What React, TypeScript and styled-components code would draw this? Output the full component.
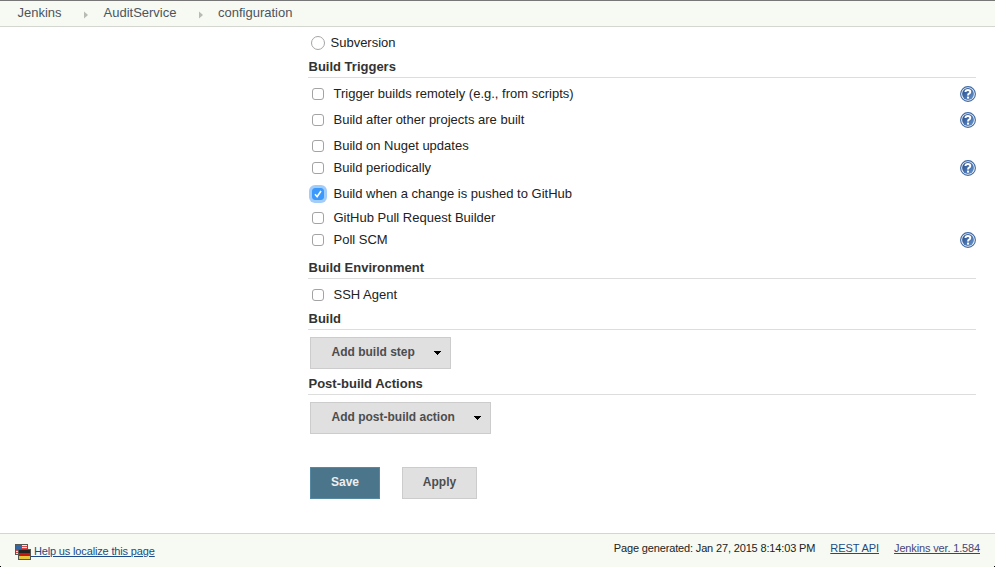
import React from "react";
import styled, { createGlobalStyle } from "styled-components";

const GlobalStyle = createGlobalStyle`
  * { box-sizing: border-box; }
  body {
    margin: 0;
    background: #fff;
    color: #333;
    font: 13px/18px "Liberation Sans", Arial, sans-serif;
    overflow: hidden;
  }
`;

const Page = styled.div`
  display: flex;
  flex-direction: column;
  height: 567px;
`;

const Breadcrumbs = styled.nav`
  display: flex;
  height: 27px;
  padding: 2px 0 0 17px;
  background: #f6faf2;
  border-top: 1px solid #777;
  border-bottom: 1px solid #d3d7cf;
  color: #4d545d;
  line-height: 19px;
`;

const Crumb = styled.span<{ $width?: number }>`
  width: ${(p) => (p.$width ? `${p.$width}px` : "auto")};
  padding-left: ${(p) => (p.$width ? 0.5 : 0)}px;
  white-space: nowrap;
`;

const CrumbArrow = styled.svg`
  width: 4px;
  height: 8px;
  margin: 8px 15px 0 0;
`;

const Form = styled.main`
  flex: 1;
  width: 668px;
  margin-left: 308px;
  padding-top: 7px;
`;

const Heading = styled.h2<{ $gap: number }>`
  height: 21px;
  margin: ${(p) => p.$gap}px 0 7px;
  padding-left: 0.5px;
  border-bottom: 1px solid #ddd;
  color: #333;
  font-size: 13px;
  font-weight: bold;
  line-height: 20px;
`;

const Row = styled.label<{ $gap?: number }>`
  display: flex;
  align-items: center;
  height: 18px;
  margin-top: ${(p) => p.$gap ?? 0}px;
  padding-left: 4px;
`;

const Label = styled.span`
  flex: 1;
  color: #222;
`;

const Radio = styled.input.attrs({ type: "radio" })`
  appearance: none;
  width: 14px;
  height: 14px;
  margin: 0 5.5px 0 -1px;
  border: 1px solid #a5a5a5;
  border-radius: 50%;
  background: #fff;
`;

const Box = styled.span<{ $checked?: boolean }>`
  display: flex;
  width: 12px;
  height: 12px;
  margin-right: 9.5px;
  border: 1px solid ${(p) => (p.$checked ? "#3b99fc" : "#a3a3a3")};
  border-radius: 3px;
  background: ${(p) => (p.$checked ? "#3b99fc" : "#fff")};
  box-shadow: ${(p) => (p.$checked ? "0 0 0 3px #a2cdfb" : "none")};
`;

const Help = styled.svg`
  width: 16px;
  height: 16px;
`;

const Button = styled.button<{ $primary?: boolean; $menu?: boolean; $width: number }>`
  display: flex;
  justify-content: ${(p) => (p.$menu ? "space-between" : "center")};
  width: ${(p) => p.$width}px;
  height: 32px;
  margin: 0;
  padding: ${(p) => (p.$menu ? "0 9px 0 20.5px" : "0")};
  border: 1px solid ${(p) => (p.$primary ? "#5788a1" : "#ccc")};
  border-radius: 0;
  background: ${(p) => (p.$primary ? "#4b758b" : "#e0e0e0")};
  color: ${(p) => (p.$primary ? "#eee" : "#4d4d4d")};
  font: bold 12px/29px "Liberation Sans", Arial, sans-serif;
`;

const Caret = styled.svg`
  width: 7px;
  height: 4px;
  margin-top: 13px;
`;

const Buttons = styled.div<{ $top?: number }>`
  display: flex;
  gap: 22px;
  margin: ${(p) => p.$top ?? 0}px 0 0 2px;
`;

const Footer = styled.footer`
  display: flex;
  justify-content: space-between;
  height: 34px;
  padding: 6px 15px 0;
  background:
    linear-gradient(#000, #000) left bottom / 1px 1px no-repeat,
    linear-gradient(#000, #000) right bottom / 1px 1px no-repeat,
    #f6faf2;
  border-top: 1px solid #d3d7cf;
  font-size: 11px;
  line-height: 17px;
  letter-spacing: -0.15px;
  color: #222;
`;

const Localize = styled.div`
  display: flex;
  padding-top: 3px;
`;

const Flags = styled.svg`
  width: 16px;
  height: 16px;
  margin-top: 1px;
`;

const Info = styled.div`
  display: flex;
  gap: 15px;
`;

const Link = styled.a<{ $visited?: boolean; $spacing?: number }>`
  color: ${(p) => (p.$visited ? "#484478" : "#204a87")};
  letter-spacing: ${(p) => p.$spacing ?? -0.15}px;
  text-decoration: underline;
  text-decoration-color: ${(p) => (p.$visited ? "#5c3566" : "#204a87")};
  text-underline-offset: 1px;
  white-space: pre;
`;

const Separator = () => (
  <CrumbArrow viewBox="0 0 4 8">
    <path d="M0 .5 4 4 0 7.5Z" fill="#b8bab5" />
  </CrumbArrow>
);

const HelpIcon = () => (
  <Help viewBox="0 0 16 16">
    <defs>
      <linearGradient id="help" x2="1" y2="1">
        <stop offset="0" stopColor="#23498a" />
        <stop offset="1" stopColor="#6b98cc" />
      </linearGradient>
    </defs>
    <circle cx="8" cy="8" r="7.4" fill="#f2f6fb" stroke="#3f69a3" strokeWidth="1.1" />
    <circle cx="8" cy="8" r="5.9" fill="url(#help)" />
    <path d="M5.5 6.1V5.2Q5.8 4 7.8 4 10.3 4 10.3 5.9 10.3 7.1 9 7.7 8 8.2 8 9.6" fill="none" stroke="#fff" strokeWidth="1.9" />
    <rect x="7" y="10.6" width="2" height="2" fill="#fff" />
  </Help>
);

const DropCaret = () => (
  <Caret viewBox="0 0 7 4">
    <path d="M0 0h7v1H6v1H5v1H4v1H3V3H2V2H1V1H0z" fill="#000" />
  </Caret>
);

type OptionProps = { text: string; gap?: number; checked?: boolean; help?: boolean };

const Option = ({ text, gap, checked, help }: OptionProps) => (
  <Row $gap={gap}>
    <Box $checked={checked}>
      {checked && (
        <svg width="10" height="10" viewBox="0 0 10 10">
          <path d="M2 5.3 4.1 7.7 8 2" fill="none" stroke="#fff" strokeWidth="1.6" />
        </svg>
      )}
    </Box>
    <Label>{text}</Label>
    {help && <HelpIcon />}
  </Row>
);

const triggers: OptionProps[] = [
  { text: "Trigger builds remotely (e.g., from scripts)", help: true },
  { text: "Build after other projects are built", gap: 8, help: true },
  { text: "Build on Nuget updates", gap: 8 },
  { text: "Build periodically", gap: 4, help: true },
  { text: "Build when a change is pushed to GitHub", gap: 8, checked: true },
  { text: "GitHub Pull Request Builder", gap: 6 },
  { text: "Poll SCM", gap: 4, help: true },
];

export default function App() {
  return (
    <Page>
      <GlobalStyle />
      <Breadcrumbs>
        <Crumb $width={67}>Jenkins</Crumb>
        <Separator />
        <Crumb $width={96}>AuditService</Crumb>
        <Separator />
        <Crumb>configuration</Crumb>
      </Breadcrumbs>
      <Form>
        <Row>
          <Radio />
          <Label>Subversion</Label>
        </Row>
        <Heading $gap={5}>Build Triggers</Heading>
        {triggers.map((t) => (
          <Option key={t.text} {...t} />
        ))}
        <Heading $gap={9}>Build Environment</Heading>
        <Option text="SSH Agent" />
        <Heading $gap={5}>Build</Heading>
        <Buttons>
          <Button $menu $width={141}>
            <span>Add build step</span>
            <DropCaret />
          </Button>
        </Buttons>
        <Heading $gap={5}>Post-build Actions</Heading>
        <Buttons>
          <Button $menu $width={181}>
            <span>Add post-build action</span>
            <DropCaret />
          </Button>
        </Buttons>
        <Buttons $top={33}>
          <Button $primary $width={70}>Save</Button>
          <Button $width={75}>Apply</Button>
        </Buttons>
      </Form>
      <Footer>
        <Localize>
          <Flags viewBox="0 0 16 16">
            <rect x=".5" y=".5" width="12" height="10" fill="#eee" stroke="#555753" />
            <path d="M7 2.5h5M7 4.5h5M1 6.5h11M1 8.5h11" stroke="#d44" />
            <rect x="1" y="1" width="6" height="5" fill="#3465a4" />
            <rect x="3.5" y="5.5" width="12" height="10" fill="#222" stroke="#555753" />
            <rect x="4" y="9" width="11" height="3" fill="#c81414" />
            <rect x="4" y="12" width="11" height="3" fill="#e5c63c" />
          </Flags>
          <Link> Help us localize this page</Link>
        </Localize>
        <Info>
          <span>Page generated: Jan 27, 2015 8:14:03 PM</span>
          <Link $spacing={-0.07}>REST API</Link>
          <Link $visited>Jenkins ver. 1.584</Link>
        </Info>
      </Footer>
    </Page>
  );
}
